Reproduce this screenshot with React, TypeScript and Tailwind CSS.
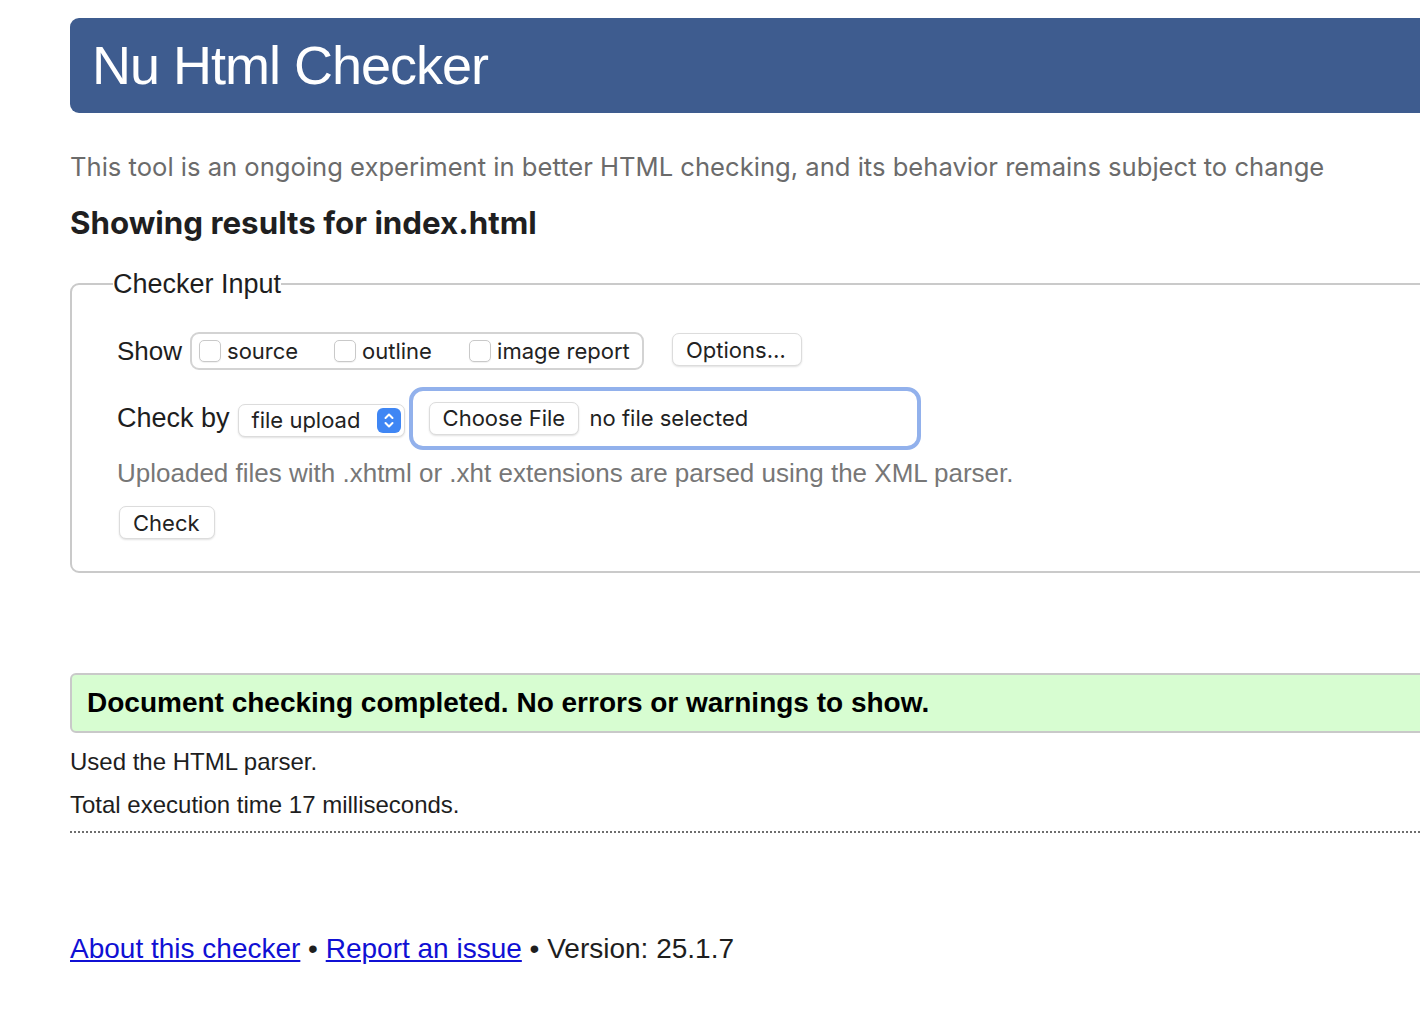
import React from "react";

const arial = { fontFamily: '"Liberation Sans", Arial, Helvetica, sans-serif' };
const ui = { fontFamily: 'Inter, "Noto Sans", sans-serif' };

function Checkbox() {
  return (
    <span className="inline-block w-[22px] h-[22px] rounded-[5px] border border-[#c9c9c9] bg-white shadow-[0_1px_1px_rgba(0,0,0,0.06)]" />
  );
}

function Stepper() {
  return (
    <span className="flex items-center justify-center w-[24px] h-[25px] rounded-[6px] bg-[#3f86f4]">
      <svg width="12" height="17" viewBox="0 0 12 17" fill="none">
        <path d="M2.5 6 L6 2.5 L9.5 6" stroke="white" strokeWidth="2" strokeLinecap="round" strokeLinejoin="round" />
        <path d="M2.5 11 L6 14.5 L9.5 11" stroke="white" strokeWidth="2" strokeLinecap="round" strokeLinejoin="round" />
      </svg>
    </span>
  );
}

export default function App() {
  return (
    <div className="w-full min-h-[1030px] bg-white overflow-hidden">
      <div className="pl-[70px] pt-[18px] w-[1520px]" style={arial}>
        <header className="h-[95px] w-[1450px] rounded-[9px] bg-[#3e5c8f] flex items-center pl-[22px]">
          <h1 className="text-white text-[54px] leading-none tracking-[-1px] pb-[1px]">Nu Html Checker</h1>
        </header>

        <p className="mt-[39px] text-[25.6px] leading-[30px] text-[#6b6b6b]" style={ui}>
          This tool is an ongoing experiment in better HTML checking, and its behavior remains subject to change
        </p>

        <h2 className="mt-[22px] text-[31.3px] leading-[38px] font-bold text-[#1f1f21]" style={ui}>
          Showing results for index.html
        </h2>

        <fieldset className="mt-[27px] w-[1450px] border-2 border-[#cacaca] rounded-[9px] pl-[45px] pt-[33px] pb-[32px]">
          <legend className="ml-[-4px] text-[27px] leading-[30px] text-[#1e1e1e]">Checker Input</legend>

          <div className="h-[38px] flex items-center">
            <span className="text-[26px] text-[#1e1e1e] mr-[8px]">Show</span>
            <div
              className="h-[38px] w-[454px] border-2 border-[#d3d3d3] rounded-[9px] flex items-center pl-[7px] text-[22px] text-[#222]"
              style={ui}
            >
              <Checkbox />
              <span className="ml-[6px] w-[107px]">source</span>
              <Checkbox />
              <span className="ml-[6px] w-[107px]">outline</span>
              <Checkbox />
              <span className="ml-[6px]">image report</span>
            </div>
            <button
              className="ml-[28px] mb-[4px] h-[33px] w-[130px] rounded-[7px] border border-[#dcdcdc] bg-white shadow-[0_1px_2px_rgba(0,0,0,0.12)] text-[22px] text-[#222] text-left pl-[13px]"
              style={ui}
            >
              Options…
            </button>
          </div>

          <div className="mt-[17px] h-[63px] flex items-center">
            <span className="text-[27px] text-[#1e1e1e] mr-[8px]">Check by</span>
            <div
              className="mt-[3px] h-[33px] w-[167px] rounded-[7px] border border-[#dcdcdc] bg-white shadow-[0_1px_2px_rgba(0,0,0,0.12)] flex items-center justify-between pl-[13px] pr-[3px] text-[22px] text-[#222]"
              style={ui}
            >
              <span>file upload</span>
              <Stepper />
            </div>
            <div
              className="ml-[4px] h-[63px] w-[512px] rounded-[14px] border-[4px] border-[#92b1ec] flex items-center pl-[16px] text-[22px] text-[#222]"
              style={ui}
            >
              <span className="h-[33px] w-[150px] rounded-[7px] border border-[#dcdcdc] bg-white shadow-[0_1px_2px_rgba(0,0,0,0.12)] flex items-center pl-[13px]">
                Choose File
              </span>
              <span className="ml-[11px]">no file selected</span>
            </div>
          </div>

          <p className="mt-[8px] text-[26px] leading-[30px] text-[#777]">
            Uploaded files with .xhtml or .xht extensions are parsed using the XML parser.
          </p>

          <button
            className="mt-[18px] ml-[2px] h-[33px] w-[96px] rounded-[7px] border border-[#dcdcdc] bg-white shadow-[0_1px_2px_rgba(0,0,0,0.12)] text-[22px] text-[#222] text-left pl-[13px]"
            style={ui}
          >
            Check
          </button>
        </fieldset>

        <div className="mt-[100px] h-[60px] w-[1450px] rounded-[6px] border-2 border-[#c9c9c9] bg-[#d7fdd1] flex items-center pl-[15px]">
          <p className="text-[28px] font-bold text-black">Document checking completed. No errors or warnings to show.</p>
        </div>

        <p className="mt-[14px] text-[24px] leading-[30px] text-[#1e1e1e]">Used the HTML parser.</p>
        <p className="mt-[13px] text-[24px] leading-[30px] text-[#1e1e1e]">Total execution time 17 milliseconds.</p>
        <div className="mt-[11px] w-[1450px] border-t-2 border-dotted border-[#6e6e6e]" />

        <p className="mt-[99px] text-[28px] leading-[34px] text-[#1e1e1e]">
          <a href="#" className="text-[#1010d4] underline">About this checker</a>
          {" • "}
          <a href="#" className="text-[#1010d4] underline">Report an issue</a>
          {" • Version: 25.1.7"}
        </p>
      </div>
    </div>
  );
}
